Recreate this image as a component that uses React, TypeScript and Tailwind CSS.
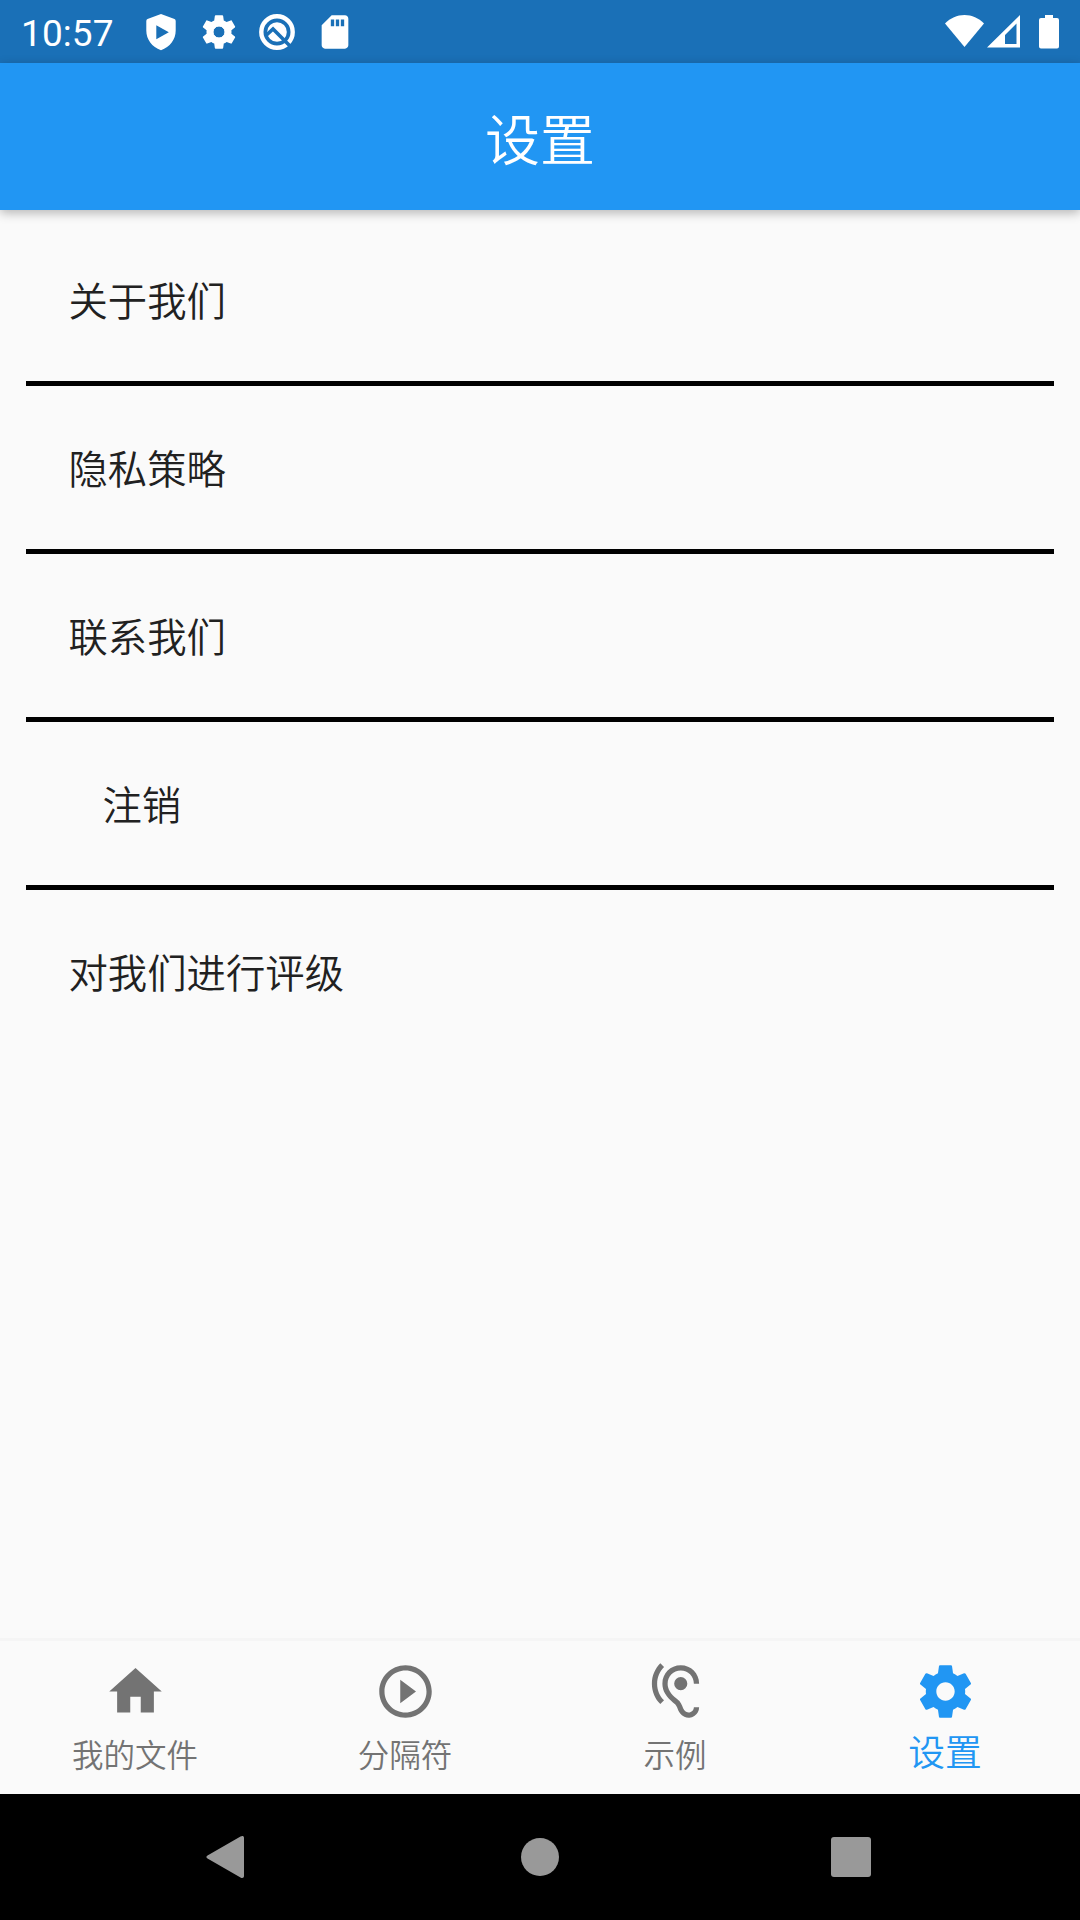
import type { ReactNode } from "react";
import { MdHearing, MdHome } from "react-icons/md";

const GEAR =
  "M19.43 12.98c.04-.32.07-.64.07-.98s-.03-.66-.07-.98l2.11-1.65c.19-.15.24-.42.12-.64l-2-3.46c-.12-.22-.39-.3-.61-.22l-2.49 1c-.52-.4-1.08-.73-1.69-.98l-.38-2.65C14.46 2.18 14.25 2 14 2h-4c-.25 0-.46.18-.49.42l-.38 2.65c-.61.25-1.17.59-1.69.98l-2.49-1c-.23-.09-.49 0-.61.22l-2 3.46c-.13.22-.07.49.12.64l2.11 1.65c-.04.32-.07.65-.07.98s.03.66.07.98l-2.11 1.65c-.19.15-.24.42-.12.64l2 3.46c.12.22.39.3.61.22l2.49-1c.52.4 1.08.73 1.69.98l.38 2.65c.03.24.24.42.49.42h4c.25 0 .46-.18.49-.42l.38-2.65c.61-.25 1.17-.59 1.69-.98l2.49 1c.23.09.49 0 .61-.22l2-3.46c.12-.22.07-.49-.12-.64l-2.11-1.65zM12 15.5c-1.93 0-3.5-1.57-3.5-3.5s1.57-3.5 3.5-3.5 3.5 1.57 3.5 3.5-1.57 3.5-3.5 3.5z";

const PLAY =
  "M10 16.5l6-4.5-6-4.5v9zM12 2C6.48 2 2 6.48 2 12s4.48 10 10 10 10-4.48 10-10S17.52 2 12 2zm0 18c-4.41 0-8-3.59-8-8s3.59-8 8-8 8 3.59 8 8-3.59 8-8 8z";

function Glyph({ d, className }: { d: string; className: string }) {
  return (
    <svg viewBox="0 0 24 24" fill="currentColor" className={className}>
      <path d={d} />
    </svg>
  );
}

function StatusBar() {
  return (
    <div className="flex h-[63px] shrink-0 items-center justify-between bg-[#1a70b7] pr-[21px] pl-[21px] text-white">
      <div className="flex items-center">
        <span className="w-[120px] pt-[3px] font-['Roboto',sans-serif] text-[37px] leading-none font-normal tracking-[0.1px]">10:57</span>
        <div className="flex items-center gap-[18px]">
          <svg viewBox="0 0 40 40" fill="currentColor" className="size-10">
            <path fillRule="evenodd" d="M20 2 33.500 7Q34.700 7.500 34.700 9V18.500C34.700 27.500 29 35 20 38.200 11 35 5.300 27.500 5.300 18.500V9Q5.300 7.500 6.500 7ZM15.300 13.200V27.200L27.800 20.200Z" />
          </svg>
          <svg viewBox="0 0 24 24" fill="currentColor" className="size-10">
            <path d={GEAR} />
            <circle cx="12" cy="12" r="3.600" fill="none" stroke="currentColor" strokeWidth=".6" />
          </svg>
          <svg viewBox="0 0 40 40" fill="none" className="size-10">
            <circle cx="20" cy="20" r="15.700" stroke="currentColor" strokeWidth="4.400" />
            <circle cx="20" cy="20" r="9.800" fill="currentColor" />
            <path d="M9 23.500 16 17 34.500 35.500" stroke="#1a70b7" strokeWidth="3.600" />
          </svg>
          <svg viewBox="0 0 24 24" fill="currentColor" className="size-10">
            <path d="M18 2h-8L4 8v12c0 1.100.9 2 2 2h12c1.100 0 2-.9 2-2V4c0-1.100-.9-2-2-2zm-6.500 6.500h-2v-4h2v4zm3 0h-2v-4h2v4zm3 0h-2v-4h2v4z" />
          </svg>
        </div>
      </div>
      <div className="flex items-center">
        <svg viewBox="0 0 39 34" fill="currentColor" className="mr-[3px] h-[34px] w-[39px]">
          <path d="M19.500 32 0 8.500C5.500 3 12 0 19.500 0S33.500 3 39 8.500Z" />
        </svg>
        <svg viewBox="0 0 33 34" fill="currentColor" className="mr-[19px] h-[34px] w-[33px]">
          <path fillRule="evenodd" d="M33 0V32.500H0ZM29.500 8.500 18 20V29H29.500Z" />
        </svg>
        <svg viewBox="0 0 20 34" fill="currentColor" className="h-[34px] w-[20px]">
          <path d="M6 0h8v3h4a2 2 0 0 1 2 2v26.500a2 2 0 0 1-2 2H2a2 2 0 0 1-2-2V5a2 2 0 0 1 2-2h4z" />
        </svg>
      </div>
    </div>
  );
}

const menu = [
  { label: "关于我们" },
  { label: "隐私策略" },
  { label: "联系我们" },
  { label: "注销", indent: true },
  { label: "对我们进行评级" },
];

function Tab({ label, icon, active }: { label: string; icon: ReactNode; active?: boolean }) {
  return (
    <button className={`flex flex-1 flex-col items-center pt-[19px] ${active ? "text-[#2196f3]" : "text-[#737373]"}`}>
      {icon}
      <span className={active ? "mt-[4px] text-[36.75px] leading-[46px]" : "mt-[9px] text-[31.5px] leading-[42px]"}>
        {label}
      </span>
    </button>
  );
}

export default function App() {
  return (
    <div className="flex h-[1920px] w-[1080px] flex-col overflow-hidden bg-[#fafafa] font-['Noto_Sans_CJK_SC',sans-serif] font-[350]">
      <StatusBar />
      <header className="flex h-[147px] shrink-0 items-center justify-center bg-[#2196f3] pb-[1px] shadow-[0_3px_10px_rgba(0,0,0,0.28)]">
        <h1 className="text-[55px] leading-[80px] text-white">设置</h1>
      </header>

      {/* Settings list */}
      <main className="flex-1 px-[26px] pt-[8px]">
        {menu.map((item, i) => (
          <div
            key={item.label}
            className={`flex h-[168px] items-center border-b-[5px] pb-[2px] text-[39.375px] text-[#212121] ${
              item.indent ? "pl-[76.5px]" : "pl-[42.5px]"
            } ${i < menu.length - 1 ? "border-black" : "border-transparent"}`}
          >
            {item.label}
          </div>
        ))}
      </main>

      <nav className="flex h-[156px] shrink-0 border-t-[3px] border-[#f5f5f5]">
        <Tab label="我的文件" icon={<MdHome className="size-[63px]" />} />
        <Tab label="分隔符" icon={<Glyph d={PLAY} className="size-[63px]" />} />
        <Tab label="示例" icon={<MdHearing className="size-[63px]" />} />
        <Tab label="设置" icon={<Glyph d={GEAR} className="size-[63px]" />} active />
      </nav>

      {/* Android navigation keys */}
      <div className="flex h-[126px] shrink-0 items-center justify-between bg-black pr-[209px] pl-[206px] text-[#999999]">
        <svg viewBox="0 0 38 42" fill="currentColor" className="h-[42px] w-[38px]">
          <path d="M34.500.6C36.300-.5 38 0 38 2v38c0 2-1.700 2.500-3.500 1.400L1.500 22.500c-1.500-1-1.500-2 0-3Z" />
        </svg>
        <div className="ml-[4px] size-[38px] rounded-full bg-[#999999]" />
        <div className="size-10 rounded-[3px] bg-[#999999]" />
      </div>
    </div>
  );
}
